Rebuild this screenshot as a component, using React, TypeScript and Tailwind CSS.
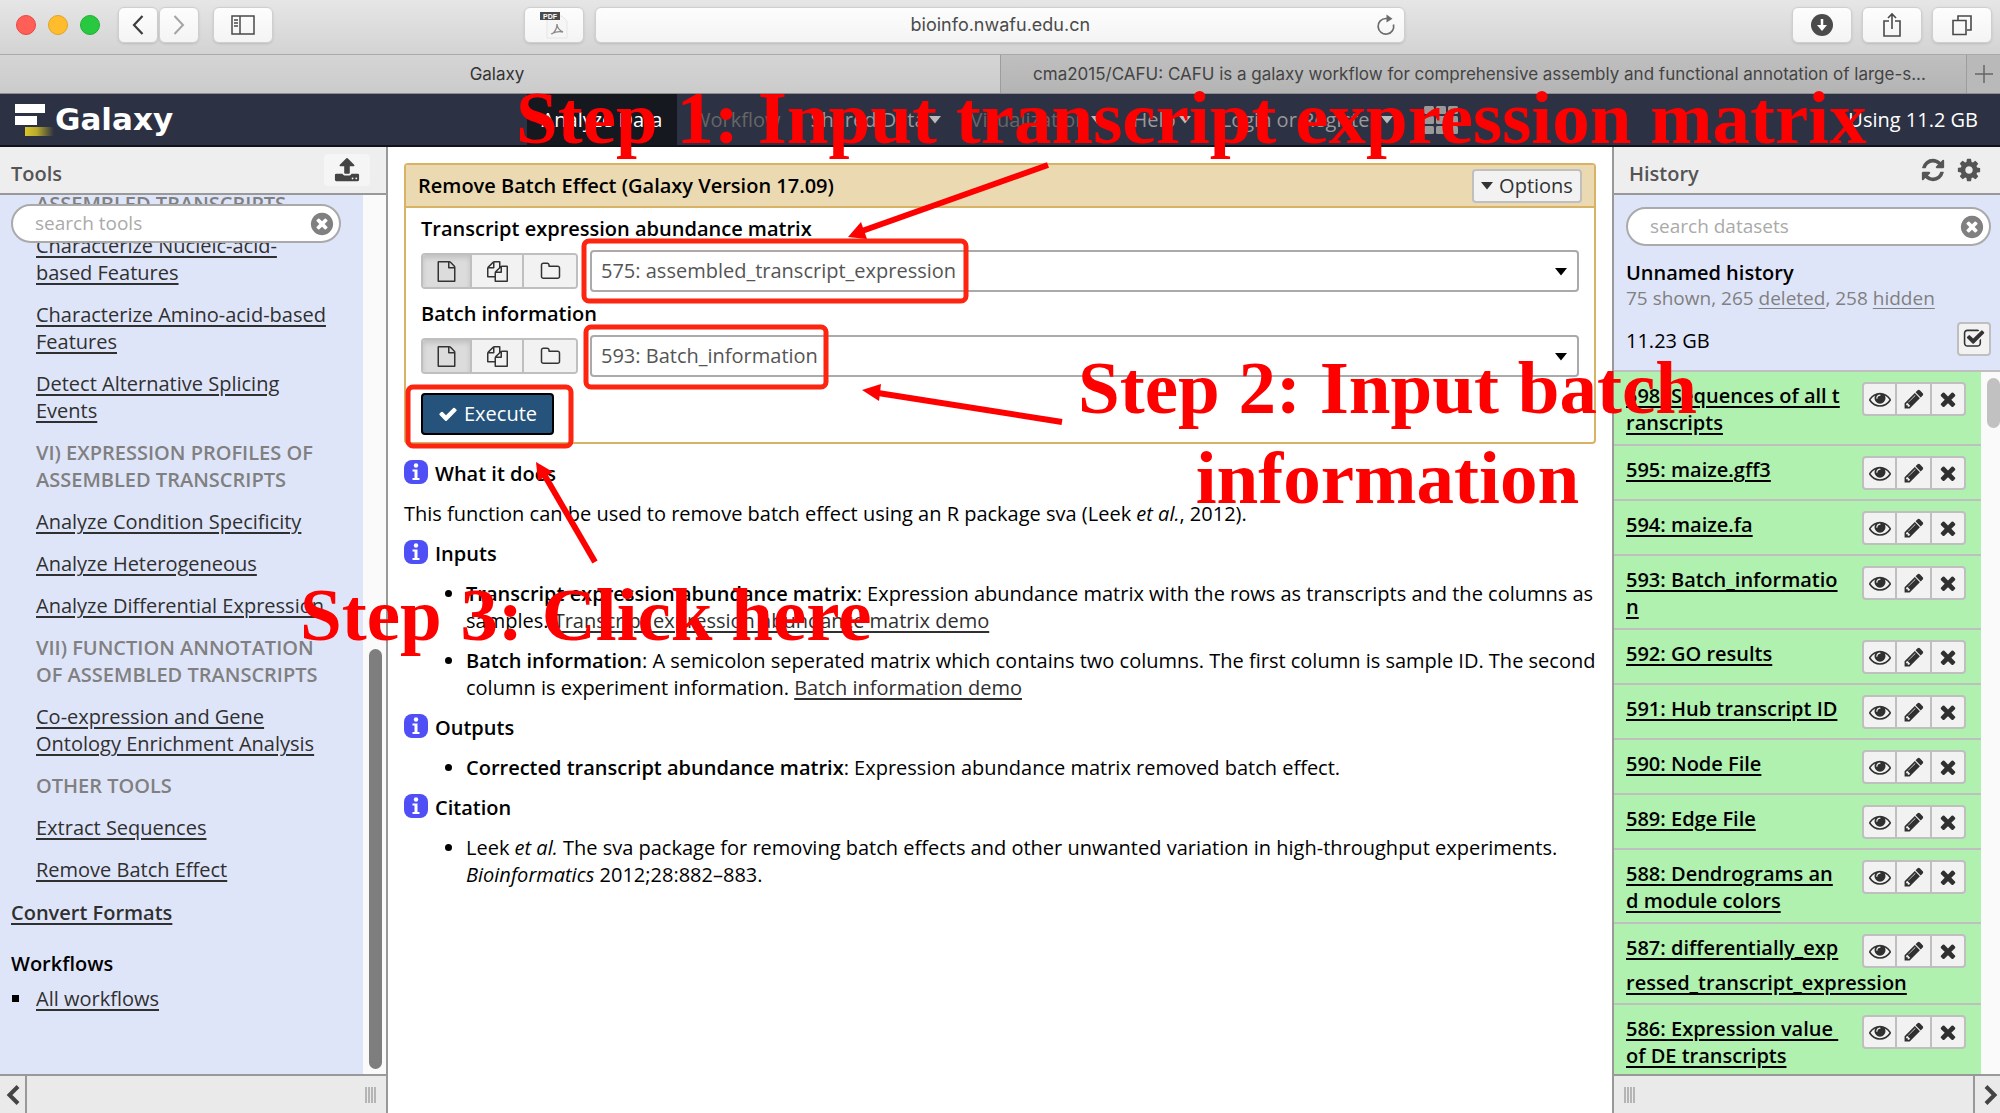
import React, { useState } from 'react';

// Font Awesome 4 outlines on a 1792 grid
const ICONS = {
  file: 'M1468 380q28 28 48 76t20 88v1152q0 40-28 68t-68 28h-1344q-40 0-68-28t-28-68v-1600q0-40 28-68t68-28h896q40 0 88 20t76 48zM1024 136v376h376q-10-29-22-41l-313-313q-12-12-41-22zM1408 1664v-1024h-416q-40 0-68-28t-28-68v-416h-768v1536h1280z',
  files: 'M1696 384q40 0 68 28t28 68v1216q0 40-28 68t-68 28h-960q-40 0-68-28t-28-68v-288h-544q-40 0-68-28t-28-68v-672q0-40 20-88t48-76l408-408q28-28 76-48t88-20h416q40 0 68 28t28 68v328q68-40 128-40h416zm-544 213l-299 299h299v-299zm-640-384l-299 299h299v-299zm196 647l316-316v-416h-384v416q0 40-28 68t-68 28h-416v640h512v-256q0-40 20-88t48-76zm956 804v-1152h-384v416q0 40-28 68t-68 28h-416v640h896z',
  folder: 'M1600 1312v-704q0-40-28-68t-68-28h-704q-40 0-68-28t-28-68v-64q0-40-28-68t-68-28h-320q-40 0-68 28t-28 68v960q0 40 28 68t68 28h1216q40 0 68-28t28-68zm128-704v704q0 92-66 158t-158 66h-1216q-92 0-158-66t-66-158v-960q0-92 66-158t158-66h320q92 0 158 66t66 158v32h672q92 0 158 66t66 158z',
  eye: 'M1664 960q-152-236-381-353 61 104 61 225 0 185-131.500 316.500t-316.500 131.500-316.500-131.500-131.500-316.500q0-121 61-225-229 117-381 353 133 205 333.500 326.500t434.500 121.500 434.500-121.500 333.500-326.500zm-720-384q0-20-14-34t-34-14q-125 0-214.500 89.500t-89.500 214.500q0 20 14 34t34 14 34-14 14-34q0-86 61-147t147-61q20 0 34-14t14-34zm848 384q0 34-20 69-140 230-376.500 368.500t-499.500 138.500-499.500-139-376.500-368q-20-35-20-69t20-69q140-229 376.500-368t499.500-139 499.500 139 376.500 368q20 35 20 69z',
  pencil: 'M491 1536l91-91-235-235-91 91v107h128v128h107zm523-928q0-22-22-22-10 0-17 7l-542 542q-7 7-7 17 0 22 22 22 10 0 17-7l542-542q7-7 7-17zm-54-192l416 416-832 832h-416v-416zm683 96q0 53-37 90l-166 166-416-416 166-165q36-38 90-38 53 0 91 38l235 234q37 39 37 91z',
  times: 'M1490 1322q0 40-28 68l-136 136q-28 28-68 28t-68-28l-294-294-294 294q-28 28-68 28t-68-28l-136-136q-28-28-28-68t28-68l294-294-294-294q-28-28-28-68t28-68l136-136q28-28 68-28t68 28l294 294 294-294q28-28 68-28t68 28l136 136q28 28 28 68t-28 68l-294 294 294 294q28 28 28 68z',
  check: 'M1671 566q0 40-28 68l-724 724-136 136q-28 28-68 28t-68-28l-136-136-362-362q-28-28-28-68t28-68l136-136q28-28 68-28t68 28l294 295 656-657q28-28 68-28t68 28l136 136q28 28 28 68z',
  timesCircle: 'M1277 1122q0-26-19-45l-181-181 181-181q19-19 19-45 0-27-19-46l-90-90q-19-19-46-19-26 0-45 19l-181 181-181-181q-19-19-45-19-27 0-46 19l-90 90q-19 19-19 46 0 26 19 45l181 181-181 181q-19 19-19 45 0 27 19 46l90 90q19 19 46 19 26 0 45-19l181-181 181 181q19 19 45 19 27 0 46-19l90-90q19-19 19-46zm387-226q0 209-103 385.500t-279.500 279.500-385.500 103-385.500-103-279.500-279.500-103-385.500 103-385.500 279.500-279.500 385.500-103 385.500 103 279.500 279.500 103 385.500z',
  refresh: 'M1639 1056q0 5-1 7-64 268-268 434.500t-478 166.500q-146 0-282.500-55t-243.500-157l-129 129q-19 19-45 19t-45-19-19-45v-448q0-26 19-45t45-19h448q26 0 45 19t19 45-19 45l-137 137q71 66 161 102t187 36q134 0 250-65t186-179q11-17 53-117 8-23 30-23h192q13 0 22.500 9.500t9.500 22.500zm25-800v448q0 26-19 45t-45 19h-448q-26 0-45-19t-19-45 19-45l138-138q-148-137-349-137-134 0-250 65t-186 179q-11 17-53 117-8 23-30 23h-199q-13 0-22.500-9.500t-9.500-22.500v-7q65-268 270-434.500t480-166.500q146 0 284 55.500t245 156.500l130-129q19-19 45-19t45 19 19 45z',
  cog: 'M1152 896q0-106-75-181t-181-75-181 75-75 181 75 181 181 75 181-75 75-181zm512-109v222q0 12-8 23t-20 13l-185 28q-19 54-39 91 35 50 107 138 10 12 10 25t-9 23q-27 37-99 108t-94 71q-12 0-26-9l-138-108q-44 23-91 38-16 136-29 186-7 28-36 28h-222q-14 0-24.500-8.500t-11.500-21.500l-28-184q-49-16-90-37l-141 107q-10 9-25 9-14 0-25-11-126-114-165-168-7-10-7-23 0-12 8-23 15-21 51-66.500t54-70.500q-27-50-41-99l-183-27q-13-2-21-12.500t-8-23.500v-222q0-12 8-23t19-13l186-28q14-46 39-92-40-57-107-138-10-12-10-24 0-10 9-23 26-36 98.500-107.500t94.500-71.500q13 0 26 10l138 107q44-23 91-38 16-136 29-186 7-28 36-28h222q14 0 24.500 8.500t11.500 21.500l28 184q49 16 90 37l142-107q9-9 24-9 13 0 25 10 129 119 165 170 7 8 7 22 0 12-8 23-15 21-51 66.500t-54 70.500q26 50 41 98l183 28q13 2 21 12.500t8 23.500z',
  upload: 'M1344 1472q0-26-19-45t-45-19-45 19-19 45 19 45 45 19 45-19 19-45zm256 0q0-26-19-45t-45-19-45 19-19 45 19 45 45 19 45-19 19-45zm128-224v320q0 40-28 68t-68 28h-1472q-40 0-68-28t-28-68v-320q0-40 28-68t68-28h427q21 56 70.500 92t110.500 36h256q61 0 110.500-36t70.500-92h427q40 0 68 28t28 68zm-325-648q-17 40-59 40h-256v448q0 26-19 45t-45 19h-256q-26 0-45-19t-19-45v-448h-256q-42 0-59-40-17-39 14-69l448-448q18-19 45-19t45 19l448 448q31 30 14 69z',
  checkSquare: 'M1472 930v318q0 119-84.500 203.500t-203.500 84.500h-832q-119 0-203.500-84.500t-84.500-203.500v-832q0-119 84.500-203.500t203.500-84.500h832q63 0 117 25 15 7 18 23 3 17-9 29l-49 49q-10 10-23 10-3 0-9-2-23-6-45-6h-832q-66 0-113 47t-47 113v832q0 66 47 113t113 47h832q66 0 113-47t47-113v-254q0-13 9-22l64-64q10-10 23-10 6 0 12 3 20 8 20 29zm231-489l-814 814q-24 24-57 24t-57-24l-430-430q-24-24-24-57t24-57l110-110q24-24 57-24t57 24l263 263 647-647q24-24 57-24t57 24l110 110q24 24 24 57t-24 57z',
};

const Icon: React.FC<{ name: keyof typeof ICONS; className?: string }> = ({ name, className }) => (
  <svg
    viewBox={name === 'file' ? '-128 0 1792 1792' : '0 0 1792 1792'}
    fill="currentColor"
    fillRule={name === 'file' ? 'evenodd' : 'nonzero'}
    className={className}
    aria-hidden="true"
  >
    <path d={ICONS[name]} />
  </svg>
);

const Caret: React.FC<{ className?: string }> = ({ className }) => (
  <svg viewBox="0 0 12 8" fill="currentColor" className={`w-3 h-2 ${className ?? ''}`} aria-hidden="true">
    <path d="M0 0h12L6 7.500z" />
  </svg>
);

const macButton =
  'h-9 rounded-md bg-gradient-to-b from-[#fdfdfd] to-[#f4f4f4] border border-[#cfcfcf] shadow-sm flex items-center justify-center text-[#4a4a4a]';

const BrowserBar = () => (
  <header className="shrink-0">
    <div className="h-[55px] pb-1 pr-2 pl-4 flex items-center bg-gradient-to-b from-[#e6e6e6] to-[#d3d3d3] border-b border-[#a9a9a9]">
      <div className="flex gap-3 w-[102px]">
        <span className="w-5 h-5 rounded-full bg-[#ff5f57] border border-[#e8473f]" />
        <span className="w-5 h-5 rounded-full bg-[#ffbd2e] border border-[#e2a325]" />
        <span className="w-5 h-5 rounded-full bg-[#28c940] border border-[#1db032]" />
      </div>
      <button aria-label="Back" className={`${macButton} w-10`}>
        <svg viewBox="0 0 12 20" className="w-3 h-5" fill="none" stroke="#3d3d3d" strokeWidth="2.200">
          <path d="M10.500 1L2 10l8.500 9" />
        </svg>
      </button>
      <button aria-label="Forward" className={`${macButton} w-10 ml-px`}>
        <svg viewBox="0 0 12 20" className="w-3 h-5" fill="none" stroke="#a5a5a5" strokeWidth="2">
          <path d="M1.500 1L10 10l-8.500 9" />
        </svg>
      </button>
      <button aria-label="Sidebar" className={`${macButton} w-[60px] ml-[14px]`}>
        <svg viewBox="0 0 24 20" className="w-6 h-5" fill="none" stroke="currentColor" strokeWidth="1.500">
          <path d="M1 1h22v18H1zM9 1v18M3 5h4M3 8h4M3 11h4" />
        </svg>
      </button>
      <div className="flex-13" />
      <button aria-label="Save as PDF" className={`${macButton} w-[60px]`}>
        <svg viewBox="0 0 30 28" className="w-[30px] h-7">
          <path d="M8 5h15l5 5v17H8z" fill="#f6f6f6" stroke="#e6e6e6" />
          <path d="M13 23c4-3 5-6 5-10M12 23c4-2 8-3 12-2M18 13c0 4 2 6 6 8" fill="none" stroke="#8a8a8a" strokeWidth="1.300" />
          <rect x="1" y="1" width="20" height="8" fill="#4b4b4b" />
          <text x="11" y="8" fontSize="7" fontWeight="bold" textAnchor="middle" fill="#fff" fontFamily="Liberation Sans, sans-serif">PDF</text>
        </svg>
      </button>
      <div className={`${macButton} w-[41%] ml-[11px] px-2`}>
        <input
          aria-label="Address"
          defaultValue="bioinfo.nwafu.edu.cn"
          className="flex-1 min-w-0 pl-5 bg-transparent text-center text-lg text-[#4a4a4a] outline-none font-[Inter,sans-serif]"
        />
        <button aria-label="Reload">
          <svg viewBox="0 0 20 22" className="w-5 h-6" fill="none" stroke="#6b6b6b" strokeWidth="1.700">
            <path d="M17.500 10.500A7.800 7.800 0 1 1 10 4.500h2" />
            <path d="M10.500 .5l6 4.200-6 3.800z" fill="#6b6b6b" stroke="none" />
          </svg>
        </button>
      </div>
      <div className="flex-20" />
      <div className="flex gap-[10px]">
        <button aria-label="Downloads" className={`${macButton} w-[60px]`}>
          <svg viewBox="0 0 24 24" className="w-6 h-6">
            <circle cx="12" cy="12" r="11" fill="#4b4b4b" />
            <path d="M12 6v8" stroke="#fff" strokeWidth="2.500" />
            <path d="M7 12h10l-5 6z" fill="#fff" />
          </svg>
        </button>
        <button aria-label="Share" className={`${macButton} w-[60px]`}>
          <svg viewBox="0 0 20 26" className="w-5 h-[26px]" fill="none" stroke="currentColor" strokeWidth="1.600">
            <path d="M7 9H2v15h16V9h-5M10 17V2M6 6l4-4 4 4" />
          </svg>
        </button>
        <button aria-label="Show tabs" className={`${macButton} w-[60px]`}>
          <svg viewBox="0 0 22 22" className="w-[22px] h-[22px]" fill="none" stroke="currentColor" strokeWidth="1.600">
            <path d="M2 6.500h13v14H2zM7 6V2h13v14h-4" />
          </svg>
        </button>
      </div>
    </div>
    <div className="h-[39px] flex text-[17px] text-[#444] border-b border-[#8e8e8e] font-[Inter,sans-serif]">
      <button className="w-1/2 pr-[6px] pt-px bg-gradient-to-b from-[#d5d5d5] to-[#cbcbcb] text-[#333]">Galaxy</button>
      <button className="flex-1 min-w-0 pl-4 pr-6 pt-px bg-gradient-to-b from-[#bfbfbf] to-[#b4b4b4] border-l border-[#9d9d9d] truncate">
        cma2015/CAFU: CAFU is a galaxy workflow for comprehensive assembly and functional annotation of large-s...
      </button>
      <button aria-label="New tab" className="w-[34px] bg-[#b9b9b9] border-l border-[#9d9d9d] flex items-center justify-center">
        <svg viewBox="0 0 18 18" className="w-[18px] h-[18px]" stroke="#666" strokeWidth="1.500">
          <path d="M9 0v18M0 9h18" />
        </svg>
      </button>
    </div>
  </header>
);

const navItems = [
  { label: 'Workflow', dim: true },
  { label: 'Shared Data', caret: true },
  { label: 'Visualization', dim: true, caret: true },
  { label: 'Help', caret: true },
  { label: 'Login or Register', caret: true },
];

const Masthead = () => (
  <nav className="shrink-0 h-[53px] flex items-stretch bg-[#2c3143] border-b-2 border-[#10131c] text-[#999]">
    <a href="#home" className="w-[527px] shrink-0 pl-[14px] flex items-center gap-px text-white">
      <svg viewBox="0 0 40 34" className="w-10 h-[34px]">
        <defs>
          <linearGradient id="tail">
            <stop offset="0" stopColor="#d8c62a" />
            <stop offset="0.400" stopColor="#b9aa2c" />
            <stop offset="1" stopColor="#2c3143" />
          </linearGradient>
        </defs>
        <rect x="1" y="1" width="30" height="9" fill="#fff" />
        <rect x="1" y="13" width="22" height="9" fill="#fff" />
        <rect x="11" y="24" width="29" height="9" fill="url(#tail)" />
      </svg>
      <span className="text-[31px] font-bold font-['DejaVu_Sans',sans-serif]">Galaxy</span>
    </a>
    <a href="#analyze" className="w-[150px] flex items-center justify-center bg-[#15181f] text-white">Analyze Data</a>
    {navItems.map((item) => (
      <a
        key={item.label}
        href={`#${item.label}`}
        className={`flex items-center gap-[3px] px-[15px] whitespace-nowrap ${item.dim ? 'text-[#666]' : ''}`}
      >
        {item.label}
        {item.caret && <Caret className="text-[#bbb]" />}
      </a>
    ))}
    <a href="#apps" aria-label="Apps" className="flex items-center px-4">
      <svg viewBox="0 0 34 28" className="w-[34px] h-7" fill="#999">
        {[0, 12, 24].map((x) =>
          [0, 10, 20].map((y) => <rect key={`${x}-${y}`} x={x} y={y} width="10" height="8" rx="1.500" />)
        )}
      </svg>
    </a>
    <span className="ml-auto pr-[22px] flex items-center text-white whitespace-nowrap">Using 11.2 GB</span>
  </nav>
);

const tools: { heading?: boolean; lines: string[] }[] = [
  { heading: true, lines: ['ASSEMBLED TRANSCRIPTS'] },
  { lines: ['Characterize Nucleic-acid-', 'based Features'] },
  { lines: ['Characterize Amino-acid-based', 'Features'] },
  { lines: ['Detect Alternative Splicing', 'Events'] },
  { heading: true, lines: ['VI) EXPRESSION PROFILES OF', 'ASSEMBLED TRANSCRIPTS'] },
  { lines: ['Analyze Condition Specificity'] },
  { lines: ['Analyze Heterogeneous'] },
  { lines: ['Analyze Differential Expression'] },
  { heading: true, lines: ['VII) FUNCTION ANNOTATION', 'OF ASSEMBLED TRANSCRIPTS'] },
  { lines: ['Co-expression and Gene', 'Ontology Enrichment Analysis'] },
  { heading: true, lines: ['OTHER TOOLS'] },
  { lines: ['Extract Sequences'] },
  { lines: ['Remove Batch Effect'] },
];

const Lines: React.FC<{ lines: string[] }> = ({ lines }) => (
  <>
    {lines.map((line, i) => (
      <React.Fragment key={line}>
        {i > 0 && <br />}
        {line}
      </React.Fragment>
    ))}
  </>
);

const SearchBox: React.FC<{ placeholder: string }> = ({ placeholder }) => (
  <div className="flex items-center h-[39px] pl-[22px] pr-1 rounded-full bg-white border-2 border-[#aaa]">
    <input
      aria-label={placeholder}
      placeholder={placeholder}
      className="flex-1 min-w-0 bg-transparent text-[19px] placeholder-[#aaa] outline-none"
    />
    <button aria-label="Clear search" className="text-[#808080]">
      <Icon name="timesCircle" className="w-[26px] h-[26px]" />
    </button>
  </div>
);

const Grip = () => (
  <div className="flex gap-px" aria-hidden="true">
    {[0, 1, 2, 3].map((i) => (
      <span key={i} className="w-[2px] h-4 bg-[#b5b5b5]" />
    ))}
  </div>
);

const Chevron: React.FC<{ flip?: boolean }> = ({ flip }) => (
  <svg viewBox="0 0 14 20" className="w-[14px] h-5" fill="none" stroke="#444" strokeWidth="4">
    <path d={flip ? 'M2 1.500L10.500 10 2 18.500' : 'M12 1.500L3.500 10l8.500 8.500'} />
  </svg>
);

const ToolPanel = () => (
  <aside className="w-[388px] shrink-0 flex flex-col border-r-2 border-[#999] bg-[#dfe5f9]">
    <div className="h-[48px] shrink-0 pl-[11px] pr-4 flex items-center justify-between bg-[#eee] border-b-2 border-[#999]">
      <h2 className="pt-[7px] font-semibold text-[#555]">Tools</h2>
      <button aria-label="Upload" className="w-[46px] h-8 rounded bg-[#f5f5f5] text-[#444] flex items-center justify-center">
        <Icon name="upload" className="w-[26px] h-[26px]" />
      </button>
    </div>
    <div className="relative flex-1 min-h-0 flex">
      <div className="flex-1 min-w-0 overflow-hidden pl-[11px] leading-[27px]">
        <div className="-mt-[5px] pl-[25px] flex flex-col gap-[15px] whitespace-nowrap">
          {tools.map((tool) =>
            tool.heading ? (
              <h3 key={tool.lines.join()} className="font-semibold text-[#808080]">
                <Lines lines={tool.lines} />
              </h3>
            ) : (
              <a key={tool.lines.join()} href="#tool" className="underline underline-offset-3 text-[#303030]">
                <Lines lines={tool.lines} />
              </a>
            )
          )}
        </div>
        <a href="#convert" className="block mt-4 font-semibold underline underline-offset-3 text-[#303030]">Convert Formats</a>
        <h3 className="mt-[24px] font-semibold">Workflows</h3>
        <ul className="mt-2">
          <li className="flex items-center">
            <span className="w-[7px] h-[7px] ml-px mr-[17px] bg-black" />
            <a href="#workflows" className="underline underline-offset-3 text-[#303030]">All workflows</a>
          </li>
        </ul>
      </div>
      <div className="w-[23px] shrink-0 bg-[#fafafa] pl-[6px] flex flex-col justify-end pb-[5px]">
        <div className="w-[13px] h-[420px] rounded-full bg-[#7e7e7e]" />
      </div>
      <div className="absolute left-[11px] top-[9px] w-[330px]">
        <SearchBox placeholder="search tools" />
      </div>
    </div>
    <div className="h-[39px] shrink-0 flex items-center justify-between pr-[10px] bg-[#eaeaea] border-t-2 border-[#999]">
      <button aria-label="Collapse tools" className="w-[27px] h-full flex items-center justify-center border-r-2 border-[#999]">
        <Chevron />
      </button>
      <Grip />
    </div>
  </aside>
);

const modes = [
  { icon: 'file' as const, label: 'Single dataset' },
  { icon: 'files' as const, label: 'Multiple datasets' },
  { icon: 'folder' as const, label: 'Dataset collection' },
];

const DataField: React.FC<{ id: string; label: string; value: string }> = ({ id, label, value }) => {
  const [mode, setMode] = useState(0);

  return (
    <div>
      <label htmlFor={id} className="block font-semibold leading-[27px]">{label}</label>
      <div className="mt-2 mb-2 flex items-center gap-[12px]">
        <div className="flex h-9 rounded border-2 border-[#bfbfbf] overflow-hidden divide-x-2 divide-[#bfbfbf]">
          {modes.map((m, i) => (
            <button
              key={m.label}
              aria-label={m.label}
              onClick={() => setMode(i)}
              className={`flex items-center justify-center text-[#333] ${i === 0 ? 'w-[49px]' : 'w-[52px]'} ${
                mode === i ? 'bg-[#dcdcdc] shadow-[inset_0_3px_5px_rgba(0,0,0,0.125)]' : 'bg-[#f2f2f2]'
              }`}
            >
              <Icon name={m.icon} className="w-[21px] h-[21px]" />
            </button>
          ))}
        </div>
        <div className="relative flex-1">
          <select
            id={id}
            className="appearance-none w-full h-[42px] px-[9px] rounded border-2 border-[#aaa] bg-white text-[#555]"
          >
            <option>{value}</option>
          </select>
          <Caret className="absolute right-3 top-[18px] pointer-events-none" />
        </div>
      </div>
    </div>
  );
};

const InfoHeading: React.FC<{ children: React.ReactNode }> = ({ children }) => (
  <h3 className="flex items-start gap-[7px] font-semibold">
    <svg viewBox="0 0 24 24" className="w-6 h-6" aria-hidden="true">
      <rect width="24" height="24" rx="8" fill="#4f4ff5" />
      <circle cx="12" cy="5.500" r="2.200" fill="#fff" />
      <path d="M8.500 9.500h5v8.500h2v2h-7v-2h2v-6.500h-2z" fill="#fff" />
    </svg>
    {children}
  </h3>
);

const Main = () => (
  <main className="flex-1 min-w-0 bg-white px-4 pt-4">
    <section className="rounded border-2 border-[#d8b365]">
      <div className="h-[43px] pl-3 pr-3 flex items-center justify-between bg-[#ebd9b2] border-b-2 border-[#d8b365]">
        <h1 className="font-semibold">Remove Batch Effect (Galaxy Version 17.09)</h1>
        <button className="h-[34px] w-[110px] rounded border-2 border-[#bfbfbf] bg-[#f2f2f2] text-[#333] flex items-center justify-center gap-[6px]">
          <Caret />
          Options
        </button>
      </div>
      <form className="pl-[15px] pr-[15px] pt-[7px] pb-[7px]" onSubmit={(e) => e.preventDefault()}>
        <DataField id="matrix" label="Transcript expression abundance matrix" value="575: assembled_transcript_expression" />
        <DataField id="batch" label="Batch information" value="593: Batch_information" />
        <button className="mt-4 h-[42px] w-[133px] rounded border-2 border-black bg-[#25537b] text-white flex items-center justify-center gap-[6px]">
          <Icon name="check" className="w-5 h-5" />
          Execute
        </button>
      </form>
    </section>
    <div className="mt-4 leading-[27px] flex flex-col gap-[13px] whitespace-nowrap">
      <InfoHeading>What it does</InfoHeading>
      <p>
        This function can be used to remove batch effect using an R package sva (Leek <em>et al.</em>, 2012).
      </p>
      <InfoHeading>Inputs</InfoHeading>
      <ul className="pl-[62px] list-disc flex flex-col gap-[13px]">
        <li>
          <b className="font-semibold">Transcript expression abundance matrix</b>: Expression abundance matrix with the rows as transcripts and the columns as
          <br />
          samples. <a href="#demo1" className="underline underline-offset-3 text-[#303030]">Transcript expression abundance matrix demo</a>
        </li>
        <li>
          <b className="font-semibold">Batch information</b>: A semicolon seperated matrix which contains two columns. The first column is sample ID. The second
          <br />
          column is experiment information. <a href="#demo2" className="underline underline-offset-3 text-[#303030]">Batch information demo</a>
        </li>
      </ul>
      <InfoHeading>Outputs</InfoHeading>
      <ul className="pl-[62px] list-disc">
        <li>
          <b className="font-semibold">Corrected transcript abundance matrix</b>: Expression abundance matrix removed batch effect.
        </li>
      </ul>
      <InfoHeading>Citation</InfoHeading>
      <ul className="pl-[62px] list-disc">
        <li>
          Leek <em>et al.</em> The sva package for removing batch effects and other unwanted variation in high-throughput experiments.
          <br />
          <em>Bioinformatics</em> 2012;28:882–883.
        </li>
      </ul>
    </div>
  </main>
);

const datasets: { lines: string[]; wide?: boolean }[] = [
  { lines: ['598: Sequences of all t', 'ranscripts'] },
  { lines: ['595: maize.gff3'] },
  { lines: ['594: maize.fa'] },
  { lines: ['593: Batch_informatio', 'n'] },
  { lines: ['592: GO results'] },
  { lines: ['591: Hub transcript ID'] },
  { lines: ['590: Node File'] },
  { lines: ['589: Edge File'] },
  { lines: ['588: Dendrograms an', 'd module colors'] },
  { lines: ['587: differentially_exp', 'ressed_transcript_expression'], wide: true },
  { lines: ['586: Expression value ', 'of DE transcripts'] },
];

const HistoryPanel = () => (
  <aside className="w-[388px] shrink-0 flex flex-col border-l-2 border-[#999] bg-[#dfe5f9]">
    <div className="h-[48px] shrink-0 pl-[15px] pr-[18px] flex items-center gap-[10px] bg-[#eee] border-b-2 border-[#999] text-[#555]">
      <h2 className="pt-[7px] mr-auto font-semibold">History</h2>
      <button aria-label="Refresh history"><Icon name="refresh" className="w-[26px] h-[26px]" /></button>
      <button aria-label="History options"><Icon name="cog" className="w-[26px] h-[26px]" /></button>
    </div>
    <div className="shrink-0 pl-[12px] pr-[9px] pt-[12px] pb-[14px] border-b-2 border-[#bfbfbf]">
      <SearchBox placeholder="search datasets" />
      <h3 className="mt-[13px] font-semibold leading-[27px]">Unnamed history</h3>
      <p className="text-[19px] leading-6 text-[#808080]">
        75 shown, 265 <a href="#deleted" className="underline underline-offset-3">deleted</a>, 258{' '}
        <a href="#hidden" className="underline underline-offset-3">hidden</a>
      </p>
      <div className="mt-3 flex items-center justify-between">
        <span className="pt-1">11.23 GB</span>
        <button aria-label="Select datasets" className="w-[34px] h-[34px] rounded border-2 border-[#bfbfbf] bg-[#f2f2f2] text-[#333] flex items-center justify-center">
          <Icon name="checkSquare" className="w-[22px] h-[22px]" />
        </button>
      </div>
    </div>
    <div className="flex-1 min-h-0 flex">
      <ul className="flex-1 min-w-0 overflow-hidden bg-[#b0f1b0]">
        {datasets.map((d) => (
          <li key={d.lines[0]} className="flex items-start justify-between pt-[10px] pl-[12px] pr-[15px] border-b-2 border-[#bfbfbf]">
            <a
              href="#dataset"
              className={`w-[225px] whitespace-pre font-semibold underline underline-offset-3 ${
                d.wide ? '-mt-1 mb-[3px] leading-[35px]' : 'mb-2 leading-[27px]'
              }`}
            >
              <Lines lines={d.lines} />
            </a>
            <div className="mb-[9px] h-[34px] flex shrink-0 rounded border-2 border-[#bfbfbf] bg-[#f2f2f2] text-[#303030] divide-x-2 divide-[#bfbfbf]">
              <button aria-label="View data" className="w-[33px] flex items-center justify-center"><Icon name="eye" className="w-[22px] h-[22px]" /></button>
              <button aria-label="Edit attributes" className="w-[35px] flex items-center justify-center"><Icon name="pencil" className="w-[22px] h-[22px]" /></button>
              <button aria-label="Delete" className="w-[32px] flex items-center justify-center"><Icon name="times" className="w-[22px] h-[22px]" /></button>
            </div>
          </li>
        ))}
      </ul>
      <div className="w-[19px] shrink-0 pt-[6px] pl-[6px] bg-[#fafafa]">
        <div className="w-[13px] h-[50px] rounded-full bg-[#c1c1c1]" />
      </div>
    </div>
    <div className="h-[39px] shrink-0 flex items-center justify-between pl-[10px] bg-[#eaeaea] border-t-2 border-[#999]">
      <Grip />
      <button aria-label="Collapse history" className="w-[27px] h-full flex items-center justify-end pr-[2px] border-l-2 border-[#999]">
        <Chevron flip />
      </button>
    </div>
  </aside>
);

// Tutorial marks drawn over the page
const Annotations = () => (
  <div className="absolute inset-0 overflow-hidden pointer-events-none text-[#ff0000] text-[75px] leading-[90px] font-bold whitespace-nowrap font-['Liberation_Serif',serif]">
    <svg className="absolute inset-0 w-full h-full" aria-hidden="true">
      <g fill="none" stroke="#fd2410" strokeWidth="5">
        <rect x="584" y="241" width="382" height="60" rx="5" />
        <rect x="586" y="327" width="240" height="60" rx="5" />
        <rect x="408" y="387" width="163" height="59" rx="5" />
      </g>
      <g stroke="#ff0000" strokeWidth="6">
        <path d="M1048 165L862 231" />
        <path d="M1062 422L878 393" />
        <path d="M595 562L545 476" />
      </g>
      <g fill="#ff0000">
        <path d="M848 237L861 222L867 239z" />
        <path d="M862 390L881 384L879 401z" />
        <path d="M536 462L553 472L538 481z" />
      </g>
    </svg>
    <p className="absolute left-[516px] top-[73px]">Step 1: Input transcript expression matrix</p>
    <p className="absolute left-[1078px] top-[343px] text-center">
      Step 2: Input batch
      <br />
      information
    </p>
    <p className="absolute left-[300px] top-[570px]">Step 3: Click here</p>
  </div>
);

export default function App() {
  return (
    <div className="relative h-screen flex flex-col overflow-hidden bg-white text-black text-[20px] font-['Open_Sans',sans-serif]">
      <BrowserBar />
      <Masthead />
      <div className="flex-1 min-h-0 flex">
        <ToolPanel />
        <Main />
        <HistoryPanel />
      </div>
      <Annotations />
    </div>
  );
}
